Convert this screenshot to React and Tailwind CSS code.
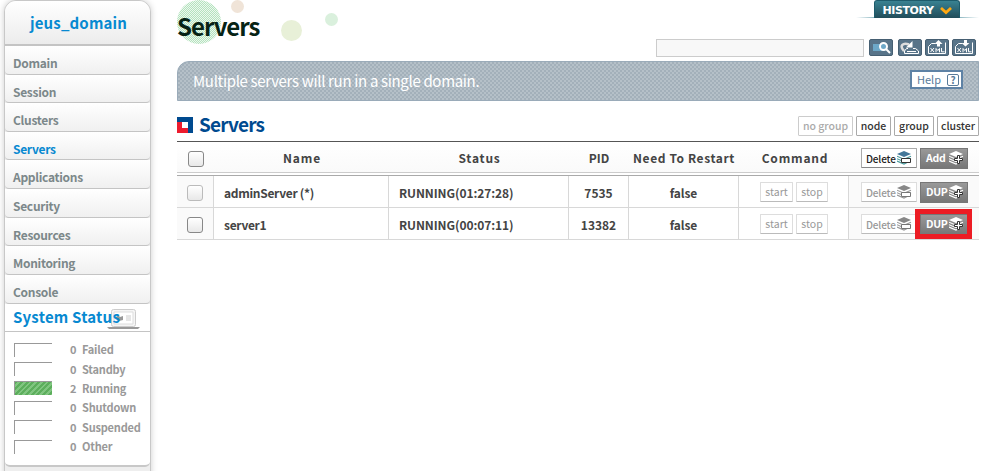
const nav = [
  ['Domain', 'h-[29px]'], ['Session', 'h-[28px]'], ['Clusters', 'h-[29px]'], ['Servers', 'h-[28px]'],
  ['Applications', 'h-[29px]'], ['Security', 'h-[29px]'], ['Resources', 'h-[28px]'], ['Monitoring', 'h-[29px]'], ['Console', 'h-[29px]'],
];
const stats = [['Failed', 0], ['Standby', 0], ['Running', 2], ['Shutdown', 0], ['Suspended', 0], ['Other', 0]];

function Layers({ color = '#fff', base = '#fff', sign = 'minus' }) {
  return (
    <svg width="15" height="14" viewBox="0 0 15 14" className="shrink-0">
      <path d="M0 3l7-3 7 3-7 3z" fill={color} />
      <path d="M0 5.200l7 3 7-3M0 7.700l7 3 7-3M0 10l7 3 4-2" fill="none" stroke={base} strokeWidth="1.200" />
      {sign === 'minus' ? (
        <path d="M4.500 7.500h9v4h-9z" fill="#fff" stroke={color === '#888' ? '#777' : '#333'} />
      ) : (
        <path d="M8.500 4.500h2v3h3v2h-3v3h-2v-3h-3v-2h3z" fill="#fff" stroke="#333" />
      )}
    </svg>
  );
}

function Small({ children, className = '' }) {
  return <div className={'flex shrink-0 items-center justify-center rounded-[1px] border bg-white text-[10.500px] leading-none ' + className}>{children}</div>;
}

function Delete({ disabled }) {
  return (
    <Small className={'h-5 w-[56px] gap-[2px] font-medium ' + (disabled ? 'border-[#ddd] border-b-[#bbb] text-[#999]' : 'border-[#aaa] border-b-[#888] text-[#222]')}>
      <span className="w-[29px] pt-px text-[10px] tracking-[-0.15px]">Delete</span>
      <Layers color={disabled ? '#888' : '#437799'} base={disabled ? '#999' : '#4a9a9c'} />
    </Small>
  );
}

function Dark({ children }) {
  return (
    <div className="flex h-[21px] w-[48px] shrink-0 items-center gap-[2px] border border-[#777] bg-linear-to-b from-[#999] to-[#777] pl-[5px] text-[10.500px] font-bold leading-none text-white">
      <span className="w-[21px] pt-px tracking-[-0.3px]">{children}</span>
      <Layers sign="plus" />
    </div>
  );
}

function Check({ faded }) {
  return <div className={'mt-[2px] size-4 rounded-[3px] border bg-linear-to-b from-white to-[#e8e8e8] ' + (faded ? 'border-[#bbb]' : 'border-[#888]')} />;
}

function Tool({ children }) {
  return (
    <div className="h-[17px] w-6 rounded-[2px] border border-[#465f72] bg-[#587489]">
      <svg width="22" height="15" viewBox="0 0 22 15" fill="none" stroke="#fff">{children}</svg>
    </div>
  );
}

function Xml({ up }) {
  return (
    <Tool>
      <path d="M9 3.500H5.500l-3 3v7h17v-11" />
      <path d={up ? 'M12.500 0l4 4h-2.500v2.500h-3V4H8.500z' : 'M12.500 6.500l4-3.500h-2.500V0h-3v3H8.500z'} fill="#fff" stroke="none" />
      <path d="M4.500 8l3.500 4m0-4l-3.500 4M10 12.300V8.500l1.800 2 1.700-2v3.800M15.500 8v3.800h3" />
    </Tool>
  );
}

function Row({ name, status, pid, faded, marked }) {
  return (
    <div className="flex h-8 border-b border-[#d8d8d8] text-[12px] font-bold text-[#444]">
      <div className="flex w-[37px] items-center border-r border-[#d8d8d8] bg-[#fafafa] pl-[10px]"><Check faded={faded} /></div>
      <div className="flex w-[175px] items-center border-r border-[#d8d8d8] pl-[10px] pt-[3px] tracking-[-0.3px]">{name}</div>
      <div className="flex w-[180px] items-center border-r border-[#d8d8d8] pl-[10px] pt-[3px] tracking-[-0.1px]">{status}</div>
      <div className="flex w-[60px] items-center justify-center border-r border-[#d8d8d8] pt-[3px]">{pid}</div>
      <div className="flex w-[110px] items-center justify-center border-r border-[#d8d8d8] pt-[3px] tracking-[-0.1px]">false</div>
      <div className="flex w-[110px] items-center gap-[3px] border-r border-[#d8d8d8] pl-[21px] pt-px font-normal text-[#999]">
        <Small className="h-5 w-[33px] border-[#ddd] border-b-[#bbb]">start</Small>
        <Small className="h-5 w-8 border-[#ddd] border-b-[#bbb]">stop</Small>
      </div>
      <div className="relative flex flex-1 items-center gap-[3px] bg-[#fafafa] pl-3 pt-px">
        <Delete disabled />
        <Dark>DUP</Dark>
        {marked && <div className="absolute left-[66px] top-[1px] h-[30px] w-[57px] border-[5px] border-[#ec1c24]" />}
      </div>
    </div>
  );
}

export default function App() {
  return (
    <div className="flex h-[471px] w-[985px] overflow-hidden bg-white font-['Noto_Sans_CJK_KR','Noto_Sans',sans-serif]">
      <aside className="ml-1 flex h-[480px] w-[147px] shrink-0 flex-col rounded-t-[12px] border border-[#c8c8c8] bg-[#eee] shadow-[0_0_6px_#ccc]">
        <div className="flex h-[45px] shrink-0 items-center justify-center rounded-t-[11px] border-b-2 border-[#c4c4c4] bg-linear-to-b from-white to-[#ececec] pl-[2px] pt-[2px] text-[15px] font-bold tracking-[0.15px] text-[#0789d1]">jeus_domain</div>
        {nav.map(([n, h]) => (
          <div key={n} className={'flex shrink-0 items-center rounded-b-[4px] border-b border-[#c4c4c4] bg-linear-to-b from-white to-[#f0f0f0] pl-2 pt-[6px] text-[12px] font-bold leading-none tracking-[-0.3px] ' + h + (n === 'Servers' ? ' text-[#0789d1]' : ' text-[#7c888a]')}>{n}</div>
        ))}
        <div className="relative flex h-[28px] shrink-0 items-center border-b border-[#c4c4c4] bg-white pb-px pl-2 text-[15px] font-bold tracking-[0.2px] text-[#0789d1]">
          <svg className="absolute left-[102px] top-[4px]" width="34" height="23" viewBox="0 0 34 23">
            <rect x="4.500" y="1.500" width="24" height="17" rx="2" fill="#f5f5f5" stroke="#ccc" />
            <path d="M7 4h19v12H7z" fill="#fff" stroke="#ddd" />
            <path d="M8 10l3-3 2 2 3-1v4l-4 1z" fill="#999" />
            <path d="M19 8h5m-5 2h5m-5 2h5" stroke="#ccc" />
            <path d="M0 19h33l-2 2H2z" fill="#999" />
          </svg>
          <span className="relative whitespace-nowrap">System Status</span>
        </div>
        <div className="flex h-[135px] shrink-0 flex-col rounded-b-[5px] border-b-2 border-[#c8c8c8] bg-white pl-[9px] pt-[8px]">
          {stats.map(([n, v]) => (
            <div key={n} className="flex h-[19.400px] items-center text-[11px] font-bold leading-none text-[#999]">
              <div className={'h-[14px] w-[38px] border-l border-t border-[#999] ' + (v ? 'bg-[repeating-linear-gradient(135deg,#5cae5c_0px,#5cae5c_2px,#80c580_2px,#80c580_4px)]' : '')} />
              <span className="ml-[18px] w-3">{v}</span>
              <span className="tracking-[-0.2px]">{n}</span>
            </div>
          ))}
        </div>
      </aside>
      <main className="ml-[26px] flex w-[802px] shrink-0 flex-col">
        <header className="relative flex h-[61px] shrink-0 justify-between">
          <svg className="absolute left-0 top-0" width="170" height="45">
            <defs><pattern id="dots" width="2" height="2" patternUnits="userSpaceOnUse"><path d="M0 0h2v2H0z" fill="#ecf8ee" /><path d="M0 0h1v1H0zM1 1h1v1H1z" fill="#b4e2be" /></pattern></defs>
            <circle cx="22" cy="22" r="22" fill="url(#dots)" />
            <circle cx="60.500" cy="6.500" r="6.500" fill="#f0e4d8" />
            <circle cx="114.500" cy="30.500" r="10.500" fill="#e8f0d8" />
            <circle cx="154.500" cy="19.500" r="6.500" fill="#daf0dd" />
          </svg>
          <h1 className="relative pt-[9px] text-[24px] font-bold leading-[34px] tracking-[-1px] text-[#062315]">Servers</h1>
          <div className="flex w-[323px] flex-col">
            <div className="flex h-[18px] items-end justify-end">
              <div className="h-px w-[18px] bg-linear-to-r from-white to-[#8fb9c3]" />
              <div className="flex h-[18px] w-[86px] items-center justify-center gap-[6px] rounded-t-[3px] border border-b-0 border-[#1d5b6b] bg-linear-to-b from-[#398292] to-[#214d5a] pt-[3px] font-['DejaVu_Sans'] text-[11px] font-bold tracking-[-0.4px] text-white">
                <span>HISTORY</span>
                <svg width="12" height="8" viewBox="0 0 12 8"><path d="M1 1l5 4.500L11 1" fill="none" stroke="#ffa812" strokeWidth="2.800" /></svg>
              </div>
              <div className="h-px w-[19px] bg-linear-to-l from-white to-[#8fb9c3]" />
            </div>
            <div className="flex pt-[21px]">
              <div className="mr-[5px] h-[18px] w-[208px] border border-[#ccc] bg-[#f8f8f8]" />
              <div className="mr-[5px]"><Tool><path d="M3 4h12v7H3z" fill="#6da8c8" stroke="none" /><circle cx="13.500" cy="6.500" r="3.500" fill="#6da8c8" strokeWidth="2" /><path d="M16 9l4 4" strokeWidth="2" /></Tool></div>
              <div className="mr-[3px]"><Tool><path d="M5 11C0 6 4 2 10 4.500" strokeWidth="2.500" stroke="#ddd" /><path d="M13.500 1v6.500H7z" fill="#fff" stroke="none" /><path d="M9 8.500H7.500l-2 2.500v2.500h14V11l-3-2.500H14M8 11.500h9" /></Tool></div>
              <div className="mr-[3px]"><Xml up /></div>
              <Xml />
            </div>
          </div>
        </header>
        <div className="flex h-10 shrink-0 items-center justify-between rounded-tl-[12px] border border-[#9aabb9] bg-[#b3bec7] bg-[repeating-conic-gradient(#a3b0ba_0_25%,#b5c0c8_0_50%)] bg-size-[4px_4px] pl-[15px] pr-[15px] text-white">
          <span className="text-[15px] tracking-[-0.33px]">Multiple servers will run in a single domain.</span>
          <div className="mb-[3px] flex h-[19px] w-[53px] items-center justify-between border-2 border-[#5e82a5] bg-white pl-[5px] pr-[2px] text-[11px] leading-none text-[#587b9a]">
            <span>Help</span><span className="flex size-3 items-center justify-center rounded-[2px] border border-[#587b9a] text-[10px] font-bold">?</span>
          </div>
        </div>
        <div className="flex h-10 shrink-0 items-center justify-between">
          <div className="flex items-center gap-[6px] pt-[7px]">
            <svg width="16" height="16"><path d="M0 0h16v16H0z" fill="#004a8f" /><path d="M0 5h5v6h6v5H0z" fill="#ed1c2e" /><path d="M5 5h6v6H5z" fill="#fff" /></svg>
            <h2 className="pb-[2px] text-[19px] font-bold leading-none tracking-[-0.8px] text-[#004a8f]">Servers</h2>
          </div>
          <div className="flex gap-[3px] pt-[10px] font-medium text-[#333]">
            <Small className="h-5 w-[55px] border-[#ccc] text-[#aaa]">no group</Small>
            <Small className="h-5 w-[35px] border-[#aaa]">node</Small>
            <Small className="h-5 w-10 border-[#aaa]">group</Small>
            <Small className="h-5 w-[42px] border-[#aaa]">cluster</Small>
          </div>
        </div>
        <div className="flex h-8 shrink-0 items-center border-y border-t-[#555] border-b-[#ccc] bg-linear-to-b from-white to-[#fafafa] pt-[2px] text-[12px] font-bold tracking-[0.8px] text-[#444]">
          <div className="w-[37px] pl-[11px]"><Check /></div>
          <div className="w-[175px] pl-px text-center">Name</div>
          <div className="w-[180px] pl-px text-center">Status</div>
          <div className="w-[60px] text-center tracking-normal">PID</div>
          <div className="w-[110px] whitespace-nowrap text-center tracking-[0.6px]">Need To Restart</div>
          <div className="w-[110px] pl-[2px] text-center">Command</div>
          <div className="flex items-center gap-[3px] pl-3 tracking-normal"><Delete /><Dark>Add</Dark></div>
        </div>
        <div className="mt-[2px] border-t border-[#aaa]">
          <Row name="adminServer (*)" status="RUNNING(01:27:28)" pid="7535" faded />
          <Row name="server1" status="RUNNING(00:07:11)" pid="13382" marked />
        </div>
      </main>
    </div>
  );
}
